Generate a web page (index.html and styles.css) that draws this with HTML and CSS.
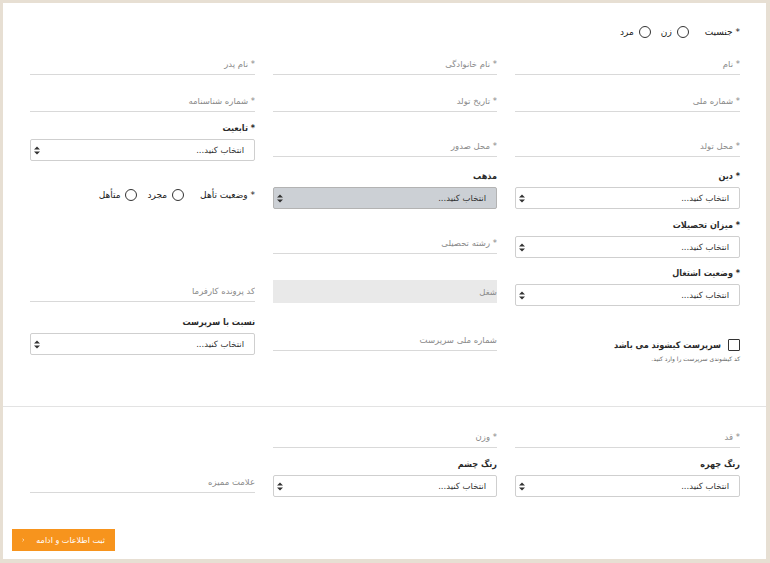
FILE: index.html
```html
<!DOCTYPE html>
<html lang="fa" dir="rtl">
<head>
  <meta charset="UTF-8">
  <title>اطلاعات فردی</title>
  <link rel="stylesheet" href="styles.css">
</head>
<body>

  <div class="card">
    <form id="personForm">

      <div class="section section-main">
        <div class="radio-group gender">
          <span class="radio-title">* جنسیت</span>
          <label><input type="radio" name="gender"> زن</label>
          <label><input type="radio" name="gender"> مرد</label>
        </div>

        <div class="grid grid-main">
          <!-- row 1 -->
          <input class="line-input" placeholder="* نام">
          <input class="line-input" placeholder="* نام خانوادگی">
          <input class="line-input" placeholder="* نام پدر">

          <!-- row 2 -->
          <input class="line-input" placeholder="* شماره ملی">
          <input class="line-input" placeholder="* تاریخ تولد">
          <input class="line-input" placeholder="* شماره شناسنامه">

          <!-- row 3 -->
          <input class="line-input" placeholder="* محل تولد">
          <input class="line-input" placeholder="* محل صدور">
          <div class="select-group">
            <label>* تابعیت</label>
            <div class="select-box">
              <select><option>انتخاب کنید...</option></select>
              <svg class="select-arrow" width="6" height="9" viewBox="0 0 6 9"><path d="M0 3.6L3 0.4L6 3.6ZM0 5.4L3 8.6L6 5.4Z"/></svg>
            </div>
          </div>

          <!-- row 4 -->
          <div class="select-group">
            <label>* دین</label>
            <div class="select-box">
              <select><option>انتخاب کنید...</option></select>
              <svg class="select-arrow" width="6" height="9" viewBox="0 0 6 9"><path d="M0 3.6L3 0.4L6 3.6ZM0 5.4L3 8.6L6 5.4Z"/></svg>
            </div>
          </div>
          <div class="select-group">
            <label>مذهب</label>
            <div class="select-box">
              <select disabled><option>انتخاب کنید...</option></select>
              <svg class="select-arrow" width="6" height="9" viewBox="0 0 6 9"><path d="M0 3.6L3 0.4L6 3.6ZM0 5.4L3 8.6L6 5.4Z"/></svg>
            </div>
          </div>
          <div class="radio-group marital">
            <span class="radio-title">* وضعیت تأهل</span>
            <label><input type="radio" name="marital"> مجرد</label>
            <label><input type="radio" name="marital"> متأهل</label>
          </div>

          <!-- row 5 -->
          <div class="select-group">
            <label>* میزان تحصیلات</label>
            <div class="select-box">
              <select><option>انتخاب کنید...</option></select>
              <svg class="select-arrow" width="6" height="9" viewBox="0 0 6 9"><path d="M0 3.6L3 0.4L6 3.6ZM0 5.4L3 8.6L6 5.4Z"/></svg>
            </div>
          </div>
          <input class="line-input" placeholder="* رشته تحصیلی">
          <div></div>

          <!-- row 6 -->
          <div class="select-group">
            <label>* وضعیت اشتغال</label>
            <div class="select-box">
              <select><option>انتخاب کنید...</option></select>
              <svg class="select-arrow" width="6" height="9" viewBox="0 0 6 9"><path d="M0 3.6L3 0.4L6 3.6ZM0 5.4L3 8.6L6 5.4Z"/></svg>
            </div>
          </div>
          <input class="line-input locked" placeholder="شغل" disabled>
          <input class="line-input" placeholder="کد پرونده کارفرما">

          <!-- row 7 -->
          <div class="checkbox-group">
            <label><input type="checkbox"> سرپرست کیشوند می باشد</label>
            <small>کد کیشوندی سرپرست را وارد کنید.</small>
          </div>
          <input class="line-input" placeholder="شماره ملی سرپرست">
          <div class="select-group">
            <label>نسبت با سرپرست</label>
            <div class="select-box">
              <select><option>انتخاب کنید...</option></select>
              <svg class="select-arrow" width="6" height="9" viewBox="0 0 6 9"><path d="M0 3.6L3 0.4L6 3.6ZM0 5.4L3 8.6L6 5.4Z"/></svg>
            </div>
          </div>
        </div>
      </div>

      <hr class="divider">

      <div class="section">
        <div class="grid grid-body">
          <input class="line-input" placeholder="* قد">
          <input class="line-input" placeholder="* وزن">
          <div></div>

          <div class="select-group">
            <label>رنگ چهره</label>
            <div class="select-box">
              <select><option>انتخاب کنید...</option></select>
              <svg class="select-arrow" width="6" height="9" viewBox="0 0 6 9"><path d="M0 3.6L3 0.4L6 3.6ZM0 5.4L3 8.6L6 5.4Z"/></svg>
            </div>
          </div>
          <div class="select-group">
            <label>رنگ چشم</label>
            <div class="select-box">
              <select><option>انتخاب کنید...</option></select>
              <svg class="select-arrow" width="6" height="9" viewBox="0 0 6 9"><path d="M0 3.6L3 0.4L6 3.6ZM0 5.4L3 8.6L6 5.4Z"/></svg>
            </div>
          </div>
          <input class="line-input" placeholder="علامت ممیزه">
        </div>
      </div>

      <div class="form-footer">
        <button type="submit" class="btn-next">
          <span>ثبت اطلاعات و ادامه</span>
          <svg width="5" height="8" viewBox="0 0 5 8"><path d="M1 1L4 4L1 7" fill="none" stroke="#fff" stroke-width="1.4"/></svg>
        </button>
      </div>

    </form>
  </div>

</body>
</html>
```

FILE: styles.css
```css
* {
  box-sizing: border-box;
}
body {
  margin: 0;
  padding: 3px 4px 4px 3px;
  background: #e7dfd3;
  font-family: "DejaVu Sans", sans-serif;
  font-size: 9px;
  color: #333;
}
.card {
  background: #fff;
}
.section {
  padding: 0 26px 0 27px;
}
.section-main {
  padding-top: 22px;
  padding-bottom: 51px;
}
.grid {
  display: grid;
  grid-template-columns: 225px 224px 225px;
  column-gap: 18px;
  align-items: end;
}
.grid-main {
  grid-template-rows: 40px 37px 45px 48px 49px 48px 49px;
}
.grid-body {
  grid-template-rows: 45px 45px;
}

/* underline inputs */
.line-input {
  display: block;
  width: 100%;
  height: 22px;
  margin: 0 0 4px;
  padding: 0;
  border: none;
  border-bottom: 1px solid #d9d9d9;
  background: transparent;
  font-family: inherit;
  font-size: 8.5px;
  color: #333;
  outline: none;
}
.line-input::placeholder {
  color: #8a8a8a;
}
.line-input.locked {
  height: 23px;
  margin-bottom: 3px;
  border-bottom: none;
  background: #e9e9e9;
}

/* selects */
.select-group label {
  display: block;
  height: 14px;
  line-height: 14px;
  margin-bottom: 4px;
  font-family: "DejaVu Sans Condensed", "DejaVu Sans", sans-serif;
  font-weight: bold;
  font-size: 9px;
  color: #2a2a2a;
}
.select-box {
  position: relative;
}
.select-box select {
  display: block;
  width: 100%;
  height: 22px;
  padding: 0 10px 0 0;
  border: 1px solid #cfcfcf;
  border-radius: 2px;
  background: #fff;
  font-family: inherit;
  font-size: 8.5px;
  color: #333;
  appearance: none;
  -webkit-appearance: none;
}
.select-box select:disabled {
  background: #ccd0d5;
  border-color: #b3b3b3;
  opacity: 1;
}
.select-arrow {
  position: absolute;
  left: 4px;
  top: 7px;
  fill: #333;
}

/* radios */
.radio-group {
  display: flex;
  align-items: center;
  height: 14px;
  color: #222;
}
.radio-title {
  margin-left: 16px;
}
.radio-group label {
  display: flex;
  align-items: center;
  margin-left: 10px;
}
.radio-group input {
  appearance: none;
  -webkit-appearance: none;
  width: 12px;
  height: 12px;
  margin: 0 0 0 5px;
  border: 1.5px solid #333;
  border-radius: 50%;
}
.marital {
  margin-bottom: 7px;
}

/* checkbox */
.checkbox-group {
  align-self: start;
  margin-top: 32px;
}
.checkbox-group label {
  display: flex;
  align-items: center;
  height: 14px;
  font-family: "DejaVu Sans Condensed", "DejaVu Sans", sans-serif;
  font-weight: bold;
  font-size: 9px;
  color: #2a2a2a;
}
.checkbox-group input {
  appearance: none;
  -webkit-appearance: none;
  width: 12px;
  height: 12px;
  margin: 0 0 0 7px;
  border: 1.5px solid #333;
  border-radius: 1px;
}
.checkbox-group small {
  display: block;
  margin-top: 3px;
  font-size: 6px;
  color: #666;
}

.divider {
  margin: 0;
  border: none;
  border-top: 1px solid #e3e3e3;
}

.form-footer {
  display: flex;
  justify-content: flex-end;
  padding: 32px 9px 8px;
}
.btn-next {
  display: flex;
  align-items: center;
  gap: 12px;
  width: 103px;
  height: 22px;
  padding: 0 10px;
  border: none;
  background: #f7941d;
  font-family: inherit;
  font-size: 8px;
  color: #fff;
  white-space: nowrap;
}
```
